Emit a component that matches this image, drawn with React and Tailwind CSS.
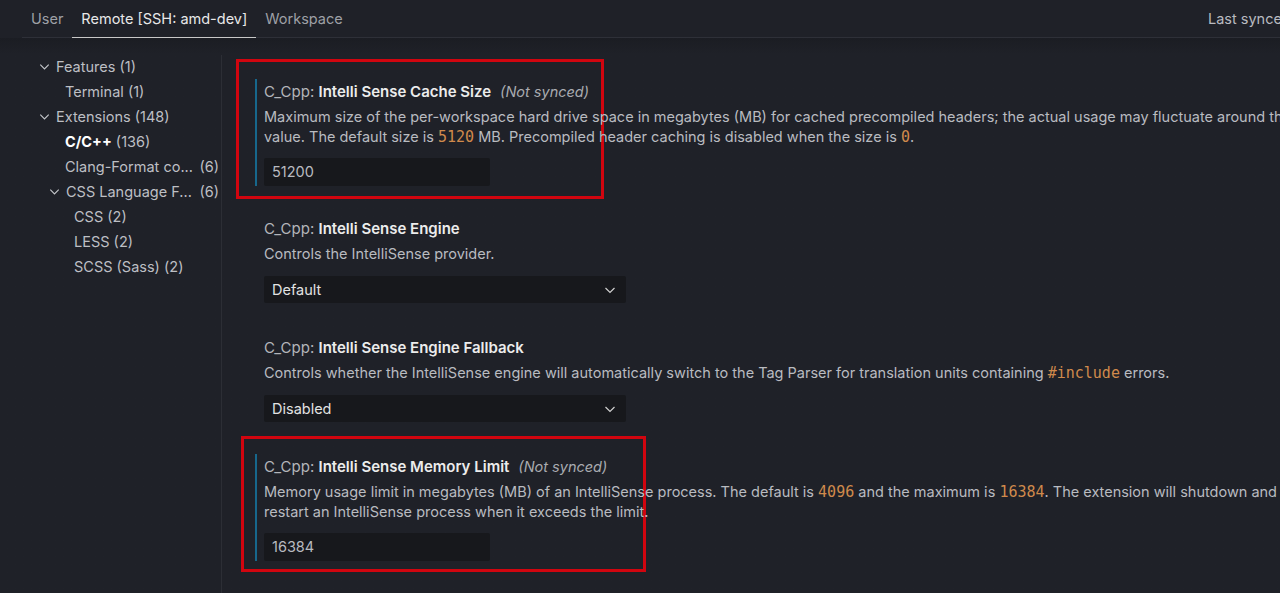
import React from 'react';

const font = { fontFamily: 'Inter, "Noto Sans", sans-serif' };

function Chevron({ className = '' }) {
  return (
    <svg viewBox="0 0 16 16" className={className} fill="none" stroke="currentColor" strokeWidth="1.2">
      <path d="M3.5 6l4.5 4.5L12.5 6" />
    </svg>
  );
}

function Code({ children }) {
  return (
    <span className="text-[#d08a4c] text-[15px]" style={{ fontFamily: '"DejaVu Sans Mono", "Liberation Mono", monospace' }}>
      {children}
    </span>
  );
}

const tree = [
  { label: 'Features', count: '(1)', indent: 'pl-[37px]', open: true },
  { label: 'Terminal', count: '(1)', indent: 'pl-[65px]' },
  { label: 'Extensions', count: '(148)', indent: 'pl-[37px]', open: true },
  { label: 'C/C++', count: '(136)', indent: 'pl-[65px]', active: true },
  { label: 'Clang-Format co...', count: '(6)', indent: 'pl-[65px]', right: true },
  { label: 'CSS Language F...', count: '(6)', indent: 'pl-[47px]', open: true, right: true },
  { label: 'CSS', count: '(2)', indent: 'pl-[74px]' },
  { label: 'LESS', count: '(2)', indent: 'pl-[74px]' },
  { label: 'SCSS (Sass)', count: '(2)', indent: 'pl-[74px]' },
];

function TreeRow({ item }) {
  return (
    <div className={`h-[25px] flex items-center pr-[2px] ${item.indent} text-[14.5px] text-[#bdbfc4]`}>
      {item.open && <Chevron className="w-[15px] h-[15px] mr-[4px] text-[#c4c6ca]" />}
      {item.right ? (
        <>
          <span className="flex-1 whitespace-nowrap">{item.label}</span>
          <span>{item.count}</span>
        </>
      ) : (
        <span className="whitespace-nowrap">
          <span className={item.active ? 'font-bold text-white' : ''}>{item.label}</span> {item.count}
        </span>
      )}
    </div>
  );
}

function Title({ name, notSynced }) {
  return (
    <div className="h-[20px] flex items-center text-[15px] whitespace-nowrap">
      <span className="text-[#b3b5ba]">C_Cpp:&nbsp;</span>
      <span className="font-semibold text-[#ececec]">{name}</span>
      {notSynced && <span className="italic text-[#a9abb0] ml-[9px] text-[14.5px]">(Not synced)</span>}
    </div>
  );
}

// modified settings get the blue bar on the left
function Modified({ children }) {
  return (
    <div className="flex">
      <div className="w-[2px] shrink-0 bg-[#17678c] mr-[7px]" />
      <div className="flex-1 min-w-0">{children}</div>
    </div>
  );
}

function Input({ value }) {
  return (
    <div className="w-[226px] h-[28px] bg-[#17181c] rounded-[2px] flex items-center pl-[8px] text-[14.5px] text-[#b9bbc0]">
      {value}
    </div>
  );
}

function Select({ value }) {
  return (
    <div className="w-[362px] h-[27px] bg-[#17181c] rounded-[2px] flex items-center justify-between pl-[8px] pr-[8px] text-[14.5px] text-[#e2e2e2]">
      <span>{value}</span>
      <Chevron className="w-[16px] h-[16px] text-[#d0d0d0]" />
    </div>
  );
}

export default function App() {
  return (
    <div className="w-[1280px] h-[593px] overflow-hidden bg-[#1f2128] flex flex-col" style={font}>
      {/* Tabs */}
      <div className="h-[38px] ml-[22px] flex items-stretch border-b border-[#2e3038] text-[14.5px] relative">
        <div className="px-[9px] flex items-center text-[#9ea0a6]">User</div>
        <div className="px-[9px] flex items-center text-[#e8e8e8] border-b border-[#c8c8c8] -mb-px">Remote [SSH: amd-dev]</div>
        <div className="px-[9px] flex items-center text-[#9ea0a6]">Workspace</div>
        <div className="flex-1" />
        <div className="absolute left-[1186px] top-0 h-full flex items-center whitespace-nowrap text-[#b9bbc0]">Last synced: 2 minutes ago</div>
      </div>

      <div className="flex flex-1 min-h-0 bg-gradient-to-b from-[#1b1d23] to-[#1f2128] to-[16px]">
        {/* Sidebar */}
        <div className="w-[221px] shrink-0 pt-[16px]">
          {tree.map((item) => (
            <TreeRow key={item.label} item={item} />
          ))}
        </div>
        <div className="w-px bg-[#2c2e35] mt-[17px] shrink-0" />

        {/* Settings */}
        <div className="flex-1 pl-[14px] pt-[21px] min-w-0">
          <div className="w-[368px] border-[3px] border-[#d1050f] pt-[17px] pb-[10px] pl-[16px]">
            <Modified>
              <div className="pt-[3px]">
                <Title name="Intelli Sense Cache Size" notSynced />
                <div className="text-[14.5px] leading-[20px] text-[#b9bbc0] mt-[5px] whitespace-nowrap w-[1100px]">
                  <div>Maximum size of the per-workspace hard drive space in megabytes (MB) for cached precompiled headers; the actual usage may fluctuate around this</div>
                  <div>value. The default size is <Code>5120</Code> MB. Precompiled header caching is disabled when the size is <Code>0</Code>.</div>
                </div>
                <div className="mt-[11px]"><Input value="51200" /></div>
              </div>
            </Modified>
          </div>

          <div className="pl-[28px] pt-[20px]">
            <Title name="Intelli Sense Engine" />
            <div className="text-[14.5px] leading-[20px] text-[#b9bbc0] mt-[5px] whitespace-nowrap">Controls the IntelliSense provider.</div>
            <div className="mt-[12px]"><Select value="Default" /></div>
          </div>

          <div className="pl-[28px] pt-[35px]">
            <Title name="Intelli Sense Engine Fallback" />
            <div className="text-[14.5px] leading-[20px] text-[#b9bbc0] mt-[5px] whitespace-nowrap">
              Controls whether the IntelliSense engine will automatically switch to the Tag Parser for translation units containing <Code>#include</Code> errors.
            </div>
            <div className="mt-[12px]"><Select value="Disabled" /></div>
          </div>

          <div className="ml-[5px] mt-[14px] w-[405px] border-[3px] border-[#d1050f] pt-[15px] pb-[8px] pl-[11px]">
            <Modified>
              <div className="pt-[3px]">
                <Title name="Intelli Sense Memory Limit" notSynced />
                <div className="text-[14.5px] leading-[20px] text-[#b9bbc0] mt-[5px] whitespace-nowrap w-[1100px]">
                  <div>Memory usage limit in megabytes (MB) of an IntelliSense process. The default is <Code>4096</Code> and the maximum is <Code>16384</Code>. The extension will shutdown and</div>
                  <div>restart an IntelliSense process when it exceeds the limit.</div>
                </div>
                <div className="mt-[11px]"><Input value="16384" /></div>
              </div>
            </Modified>
          </div>
        </div>
      </div>
    </div>
  );
}
